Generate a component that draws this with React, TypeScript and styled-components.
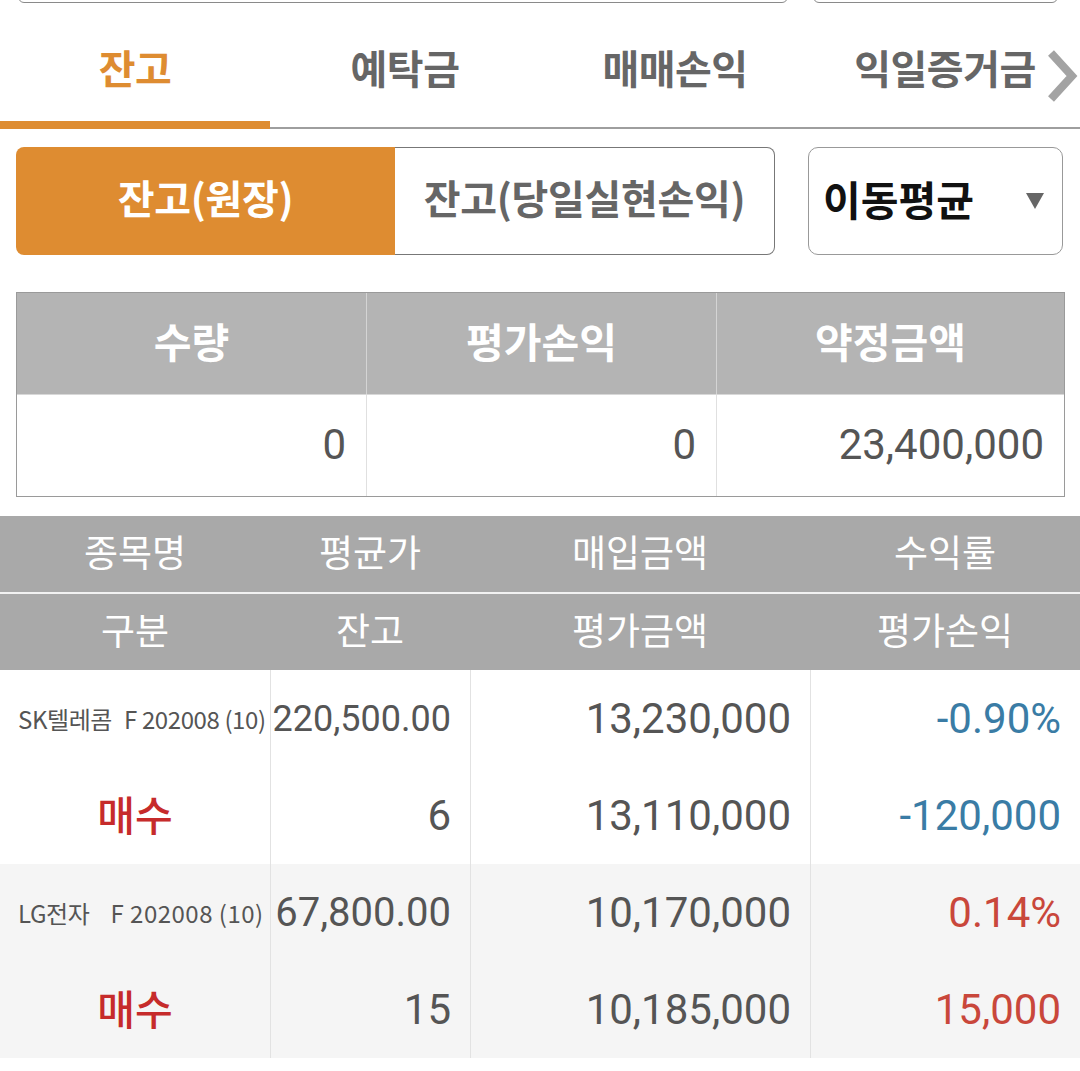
import React from 'react';
import styled, { createGlobalStyle } from 'styled-components';

const ORANGE = '#de8c31';

const GlobalStyle = createGlobalStyle`
  html, body { margin: 0; padding: 0; background: #fff; }
  body { font-family: "Noto Sans CJK KR", "Noto Sans", sans-serif; }
  * { box-sizing: border-box; }
`;

const Page = styled.div`
  width: 1080px;
  height: 1071px;
  overflow: hidden;
  background: #fff;
`;

const TopInputs = styled.div`
  display: flex;
  align-items: flex-end;
  gap: 25px;
  height: 3px;
  padding-left: 18px;
  overflow: hidden;
`;

const TopInput = styled.div<{ $w: number }>`
  flex: 0 0 ${(p) => p.$w}px;
  height: 40px;
  border: 1.5px solid #8a8a8a;
  border-radius: 6px;
`;

const TabBar = styled.div`
  position: relative;
  display: flex;
  height: 126px;
  border-bottom: 2px solid #9e9e9e;
`;

const Tab = styled.div<{ $active?: boolean }>`
  flex: 0 0 270px;
  display: flex;
  align-items: center;
  justify-content: center;
  padding-top: 10px;
  margin-bottom: -2px;
  font-size: 40px;
  font-weight: 700;
  letter-spacing: -0.5px;
  color: ${(p) => (p.$active ? ORANGE : '#666')};
  border-bottom: 8px solid ${(p) => (p.$active ? ORANGE : 'transparent')};
`;

const Chevron = styled.svg`
  position: absolute;
  right: 2px;
  top: 46px;
`;

const Controls = styled.div`
  display: flex;
  gap: 33px;
  padding: 18px 17px 0 16px;
`;

const Segments = styled.div`
  display: flex;
  width: 759px;
  height: 108px;
`;

const SegButton = styled.div<{ $active?: boolean }>`
  flex: 1;
  display: flex;
  align-items: center;
  justify-content: center;
  padding-bottom: 8px;
  font-size: 40px;
  font-weight: 700;
  letter-spacing: -0.3px;
  color: ${(p) => (p.$active ? '#fff' : '#666')};
  background: ${(p) => (p.$active ? ORANGE : '#fff')};
  border: ${(p) => (p.$active ? 'none' : '1px solid #777')};
  border-left: none;
  border-radius: ${(p) => (p.$active ? '8px 0 0 8px' : '0 8px 8px 0')};
`;

const Select = styled.div`
  flex: 1;
  height: 108px;
  display: flex;
  align-items: center;
  justify-content: space-between;
  padding: 0 18px 6px 14px;
  border: 1px solid #999;
  border-radius: 10px;
  font-size: 41px;
  font-weight: 700;
  color: #111;
`;

const Arrow = styled.svg`
  margin-top: 6px;
`;

const Summary = styled.div`
  margin: 37px 15px 0 16px;
  display: grid;
  grid-template-columns: 349px 350px 1fr;
  border: 1px solid #9a9a9a;
`;

const SumHead = styled.div<{ $first?: boolean }>`
  height: 101px;
  display: flex;
  align-items: center;
  justify-content: center;
  padding-bottom: 8px;
  background: #b4b4b4;
  color: #fff;
  font-size: 41px;
  font-weight: 700;
  border-left: ${(p) => (p.$first ? 'none' : '1px solid #d4d4d4')};
`;

const SumValue = styled.div<{ $first?: boolean }>`
  height: 102px;
  display: flex;
  align-items: center;
  justify-content: flex-end;
  padding: 0 20px 3px 0;
  font-family: Roboto, "Noto Sans", sans-serif;
  font-size: 42px;
  color: #555;
  border-top: 1px solid #d8d8d8;
  border-left: ${(p) => (p.$first ? 'none' : '1px solid #e0e0e0')};
`;

const Grid = styled.div`
  margin-top: 19px;
`;

const COLS = '270px 200px 340px 270px';

const HeadRow = styled.div<{ $second?: boolean }>`
  display: grid;
  grid-template-columns: ${COLS};
  height: ${(p) => (p.$second ? 78 : 76)}px;
  background: #a9a9a9;
  border-top: ${(p) => (p.$second ? '2px solid #f2f2f2' : 'none')};
`;

const HeadCell = styled.div`
  display: flex;
  align-items: center;
  justify-content: center;
  padding-bottom: 6px;
  color: #fff;
  font-size: 37px;
  font-weight: 400;
`;

const Record = styled.div<{ $alt?: boolean }>`
  display: grid;
  grid-template-columns: ${COLS};
  background: ${(p) => (p.$alt ? '#f5f5f5' : '#fff')};
`;

const Col = styled.div<{ $first?: boolean }>`
  display: flex;
  flex-direction: column;
  border-left: ${(p) => (p.$first ? 'none' : '1px solid #e2e2e2')};
`;

const Line = styled.div<{ $align?: 'left' | 'center' | 'right' }>`
  height: 97px;
  display: flex;
  align-items: center;
  justify-content: ${(p) =>
    p.$align === 'left' ? 'flex-start' : p.$align === 'center' ? 'center' : 'flex-end'};
  padding: ${(p) =>
    p.$align === 'left' ? '0 0 0 18px' : p.$align === 'center' ? '0 0 5px 0' : '0 19px 0 0'};
  white-space: pre;
`;

const Name = styled.span`
  font-size: 24px;
  color: #555;
  letter-spacing: -0.4px;
`;

const Code = styled.span<{ $gap: number; $spread: number }>`
  margin-left: ${(p) => p.$gap}px;
  letter-spacing: ${(p) => p.$spread}px;
`;

const Side = styled.span`
  font-size: 41px;
  font-weight: 500;
  color: #c62b2b;
`;

const Num = styled.span<{ $tone?: 'up' | 'down'; $size?: number }>`
  font-family: Roboto, "Noto Sans", sans-serif;
  font-size: ${(p) => p.$size ?? 42}px;
  color: ${(p) => (p.$tone === 'up' ? '#c9473b' : p.$tone === 'down' ? '#3a7ca5' : '#555')};
`;

type Row = {
  name: string;
  code: string;
  gap: number;
  spread: number;
  side: string;
  avg: string;
  avgSize: number;
  qty: string;
  buy: string;
  evalAmt: string;
  rate: string;
  pnl: string;
  tone: 'up' | 'down';
};

const rows: Row[] = [
  {
    name: 'SK텔레콤',
    code: 'F 202008 (10)',
    gap: 12,
    spread: -0.4,
    side: '매수',
    avg: '220,500.00',
    avgSize: 36,
    qty: '6',
    buy: '13,230,000',
    evalAmt: '13,110,000',
    rate: '-0.90%',
    pnl: '-120,000',
    tone: 'down',
  },
  {
    name: 'LG전자',
    code: 'F 202008 (10)',
    gap: 21,
    spread: 0.5,
    side: '매수',
    avg: '67,800.00',
    avgSize: 40,
    qty: '15',
    buy: '10,170,000',
    evalAmt: '10,185,000',
    rate: '0.14%',
    pnl: '15,000',
    tone: 'up',
  },
];

export default function App() {
  return (
    <Page>
      <GlobalStyle />
      <TopInputs>
        <TopInput $w={770} />
        <TopInput $w={245} />
      </TopInputs>
      <TabBar>
        <Tab $active>잔고</Tab>
        <Tab>예탁금</Tab>
        <Tab>매매손익</Tab>
        <Tab>익일증거금</Tab>
        <Chevron width="32" height="54" viewBox="0 0 32 54">
          <polyline points="5,4 26,27 5,50" fill="none" stroke="#a3a3a3" strokeWidth="8" />
        </Chevron>
      </TabBar>
      <Controls>
        <Segments>
          <SegButton $active>잔고(원장)</SegButton>
          <SegButton>잔고(당일실현손익)</SegButton>
        </Segments>
        <Select>
          <span>이동평균</span>
          <Arrow width="18" height="16" viewBox="0 0 18 16">
            <polygon points="0,0 18,0 9,16" fill="#666" />
          </Arrow>
        </Select>
      </Controls>
      <Summary>
        <SumHead $first>수량</SumHead>
        <SumHead>평가손익</SumHead>
        <SumHead>약정금액</SumHead>
        <SumValue $first>0</SumValue>
        <SumValue>0</SumValue>
        <SumValue>23,400,000</SumValue>
      </Summary>
      <Grid>
        <HeadRow>
          <HeadCell>종목명</HeadCell>
          <HeadCell>평균가</HeadCell>
          <HeadCell>매입금액</HeadCell>
          <HeadCell>수익률</HeadCell>
        </HeadRow>
        <HeadRow $second>
          <HeadCell>구분</HeadCell>
          <HeadCell>잔고</HeadCell>
          <HeadCell>평가금액</HeadCell>
          <HeadCell>평가손익</HeadCell>
        </HeadRow>
        {rows.map((r, i) => (
          <Record key={r.name} $alt={i % 2 === 1}>
            <Col $first>
              <Line $align="left">
                <Name>
                  {r.name}
                  <Code $gap={r.gap} $spread={r.spread}>
                    {r.code}
                  </Code>
                </Name>
              </Line>
              <Line $align="center">
                <Side>{r.side}</Side>
              </Line>
            </Col>
            <Col>
              <Line>
                <Num $size={r.avgSize}>{r.avg}</Num>
              </Line>
              <Line>
                <Num>{r.qty}</Num>
              </Line>
            </Col>
            <Col>
              <Line>
                <Num>{r.buy}</Num>
              </Line>
              <Line>
                <Num>{r.evalAmt}</Num>
              </Line>
            </Col>
            <Col>
              <Line>
                <Num $tone={r.tone}>{r.rate}</Num>
              </Line>
              <Line>
                <Num $tone={r.tone}>{r.pnl}</Num>
              </Line>
            </Col>
          </Record>
        ))}
      </Grid>
    </Page>
  );
}
